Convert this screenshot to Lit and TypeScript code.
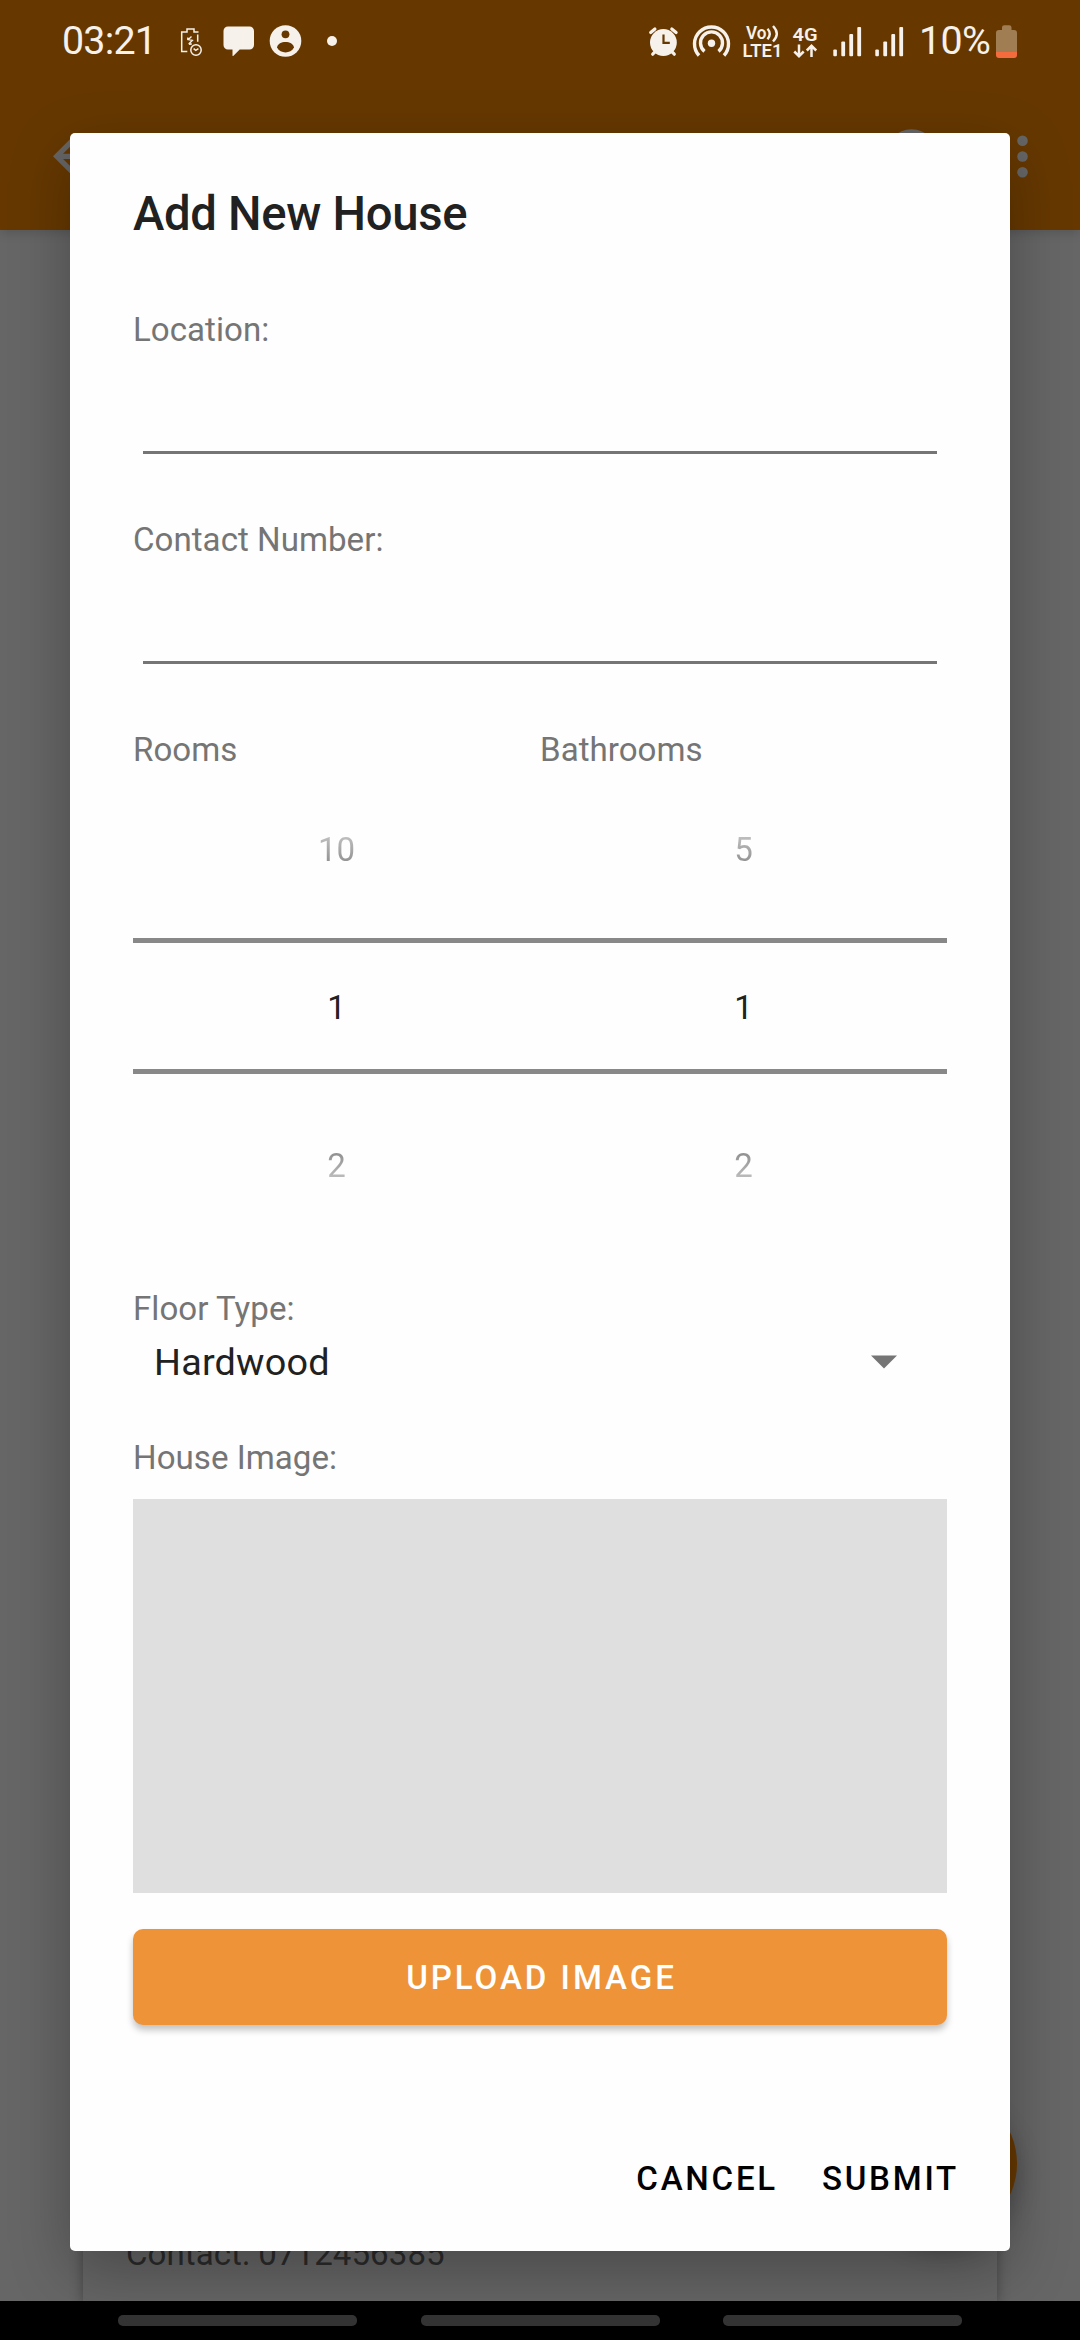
import { LitElement, html, css, svg } from "lit";
import { customElement, property } from "lit/decorators.js";

const signal = (x: number) => svg`
  <rect x=${x} y="49.5" width="3.6" height="6.7" rx="1"/>
  <rect x=${x + 8} y="41.5" width="3.8" height="14.7" rx="1"/>
  <rect x=${x + 16} y="34" width="3.8" height="22.2" rx="1"/>
  <rect x=${x + 24} y="27" width="3.8" height="29.2" rx="1"/>`;

@customElement("status-bar")
class StatusBar extends LitElement {
  static styles = css`
    :host { display: flex; align-items: flex-start; height: 82px; color: #f6f1ea;
      font: 400 39.4px/46px Roboto, sans-serif; }
    .clock { width: 114px; padding: 18px 0 0 62px; letter-spacing: -0.8px; }
    .notes { width: 170px; height: 82px; }
    .spacer { flex: 1; }
    .system { width: 225px; height: 82px; }
    .gap { width: 50px; flex: none; }
    .percent { padding-top: 18px; width: 76px; white-space: nowrap; letter-spacing: -0.7px; }
    .battery { width: 30px; height: 82px; margin-right: 55px; }
    .net { font: 600 17.5px Roboto, sans-serif; }
    .net.large { font-size: 19px; }
    svg { display: block; flex: none; }
  `;
  render() {
    return html`
      <span class="clock">03:21</span>
      <svg class="notes" viewBox="176 0 170 82" fill="none" stroke="#f6f1ea">
        <path stroke-width="1.5" d="M198.500 32H194V29h-7v3h-5.300v19.500h5.600M197.700 34.500v7.200"/>
        <path stroke-width="1.400" d="M191.500 36.500l-3.200 3 4 .9-3.600 3.600M187.800 37.500v2.500M191.800 44l-3 .2"/>
        <circle cx="196" cy="50" r="5.200" stroke-width="1.500"/>
        <path stroke-width="1.400" d="M193.600 48.600l2.200 1.800 2.600-1.800"/>
        <path fill="#f6f1ea" stroke="none" d="M228 26.5h21.5a4.5 4.5 0 0 1 4.5 4.5v14a4.5 4.5 0 0 1-4.5 4.5h-9.8L233.2 56q-.7.4-.7-.5v-6H228a4.5 4.5 0 0 1-4.5-4.5V31a4.5 4.5 0 0 1 4.5-4.5z"/>
        <circle cx="285.5" cy="41" r="15.8" fill="#f6f1ea" stroke="none"/>
        <circle cx="285.5" cy="34.3" r="3.9" fill="#663800" stroke="none"/>
        <path fill="#663800" stroke="none" d="M277 47.5c1-7.3 16-7.3 17 0-3.500 6.500-13.500 6.500-17 0z"/>
        <circle cx="332" cy="41" r="5" fill="#f6f1ea" stroke="none"/>
      </svg>
      <span class="spacer"></span>
      <svg class="system" viewBox="644 0 225 82" overflow="visible" fill="#f6f1ea">
        <circle cx="663.4" cy="42.500" r="13.4"/>
        <path fill="none" stroke="#f6f1ea" stroke-width="3.200" stroke-linecap="round" d="M650.7 32.500l4.200-3.500M671.800 29l4.300 3.500M652.700 54.200l3.300-3.300M674.300 54.200l-3.300-3.300"/>
        <path fill="none" stroke="#663800" stroke-width="2.200" d="M663.5 34.500v8.300h6.300"/>
        <circle cx="711.5" cy="43.200" r="3.700"/>
        <path fill="none" stroke="#f6f1ea" stroke-width="3.400" d="M704.500 51.400a11 11 0 1 1 14 0M699 55.500a17 17 0 1 1 25 0"/>
        <text class="net" x="746" y="39.300" textLength="20.500" lengthAdjust="spacingAndGlyphs">Vo</text>
        <path fill="none" stroke="#f6f1ea" stroke-width="2.400" d="M767.500 28.800q4.500 5 0 10.500M773 26q7.500 7.700 0 15.500"/>
        <text class="net" x="742.500" y="57.200" textLength="40" lengthAdjust="spacingAndGlyphs">LTE1</text>
        <text class="net large" x="792.500" y="40.500" textLength="25" lengthAdjust="spacingAndGlyphs">4G</text>
        <path fill="none" stroke="#f6f1ea" stroke-width="2.500" d="M799 44.500v11M794.300 51.500l4.700 4.700 4.700-4.700M811.500 57v-11M806.800 50.500l4.700-4.700 4.700 4.700"/>
        ${signal(833.3)}${signal(875.3)}
      </svg>
      <span class="gap"></span>
      <span class="percent">10%</span>
      <svg class="battery" viewBox="995 0 30 82">
        <path fill="#a17d53" d="M1002 30v-2.500q0-2.300 2.300-2.300h4.900q2.300 0 2.300 2.300V30h2.500q3 0 3 3v19.500h-21V33q0-3 3-3z"/>
        <path fill="#f46b3e" d="M996 52h21v3q0 3-3 3h-15q-3 0-3-3z"/>
      </svg>`;
  }
}

@customElement("number-picker")
class NumberPicker extends LitElement {
  @property() label = "";
  @property({ type: Array }) values: string[] = [];
  static styles = css`
    :host { display: flex; flex-direction: column; width: 407px; font: 400 33.1px/40px Roboto, sans-serif; letter-spacing: 0.03px; }
    .label { color: #757575; height: 40px; }
    .cell { display: flex; justify-content: center; color: #222; }
    .prev { padding: 60px 0 68px; }
    .next { padding: 72px 0 64px; }
    .faded { background-clip: text; -webkit-background-clip: text; color: transparent; }
    .prev .faded { background-image: linear-gradient(#bcbcbc 20%, #929292 80%); }
    .next .faded { background-image: linear-gradient(#929292 20%, #bcbcbc 80%); }
    .current { border-top: 5px solid #888; border-bottom: 5px solid #888; padding: 45px 0 41px; }
  `;
  render() {
    return html`<div class="label">${this.label}</div>
      <div class="cell prev"><span class="faded">${this.values[0]}</span></div>
      <div class="cell current">${this.values[1]}</div>
      <div class="cell next"><span class="faded">${this.values[2]}</span></div>`;
  }
}

@customElement("app-root")
class AppRoot extends LitElement {
  static styles = css`
    :host { display: block; width: 1080px; height: 2340px; font: 400 33.1px/40px Roboto, sans-serif; }
    * { box-sizing: border-box; }
    .screen { position: relative; width: 1080px; height: 2340px; overflow: hidden; display: flex; flex-direction: column; background: #666; }
    .top { background: #663800; height: 230px; box-shadow: 0 3px 10px rgba(0,0,0,.15); flex: none; }
    .toolbar { display: block; width: 1080px; height: 148px; }
    .page { flex: 1; display: flex; flex-direction: column; justify-content: flex-end; align-items: center; overflow: hidden; }
    .listing { width: 914px; height: 700px; background: #656565; color: #2b2b2b; padding: 0 43px 27px; display: flex; align-items: flex-end;
      box-shadow: 0 3px 12px rgba(0,0,0,.32); letter-spacing: 0.05px; }
    .nav { flex: none; height: 39px; background: #000; display: flex; justify-content: space-between; padding: 14px 118px 0; position: relative; z-index: 3; }
    .nav i { width: 239px; height: 11px; border-radius: 5px; background: #333; }
    .fab { position: absolute; left: 870px; top: 2090px; width: 147px; height: 147px; border-radius: 50%; background: #663800; box-shadow: 0 12px 24px rgba(0,0,0,.28); }
    .dialog { position: absolute; left: 70px; top: 133px; width: 940px; height: 2118px; background: #fefefe; border-radius: 5px;
      padding: 49px 63px 0; box-shadow: 0 20px 60px rgba(0,0,0,.28); display: flex; flex-direction: column; z-index: 2; }
    h1 { margin: 0; height: 64px; font-size: 47.25px; line-height: 64px; font-weight: 500; color: #212121; letter-spacing: -0.3px; }
    .label { color: #757575; letter-spacing: 0.03px; height: 40px; }
    .field { height: 210px; }
    .first { margin-top: 64px; }
    .line { margin: 101px 10px 0; height: 2.5px; background: #757575; }
    .pickers { display: flex; height: 559px; }
    .select { height: 109px; padding: 0 50px 0 21px; display: flex; justify-content: space-between; align-items: flex-start;
      font-size: 37.8px; line-height: 46px; letter-spacing: 0.2px; color: #212121; }
    .select span { margin-top: 10px; }
    .select svg { margin-top: 26px; }
    .preview { height: 394px; margin-top: 21px; background: #dfdfdf; flex: none; }
    .upload { height: 96px; margin-top: 36px; border: 0; border-radius: 10px; background: #ee9338; color: #fff; flex: none; padding: 2px 0 0 3px;
      font: 500 33.1px/40px Roboto, sans-serif; letter-spacing: 2.95px; box-shadow: 0 5px 7px rgba(0,0,0,.24); }
    .actions { display: flex; justify-content: flex-end; gap: 44px; margin: 134px -12px 0 0; color: #000; font-weight: 500; letter-spacing: 2.75px; }
  `;
  render() {
    return html`<div class="screen">
      <header class="top">
        <status-bar></status-bar>
        <svg class="toolbar" viewBox="0 82 1080 148" fill="#666">
          <path transform="translate(42.5 124.8) scale(2.625)" d="M20 11H7.830l5.590-5.590L12 4l-8 8 8 8 1.410-1.410L7.830 13H20v-2z"/>
          <circle cx="911.5" cy="155.500" r="26.200"/>
          <circle cx="1022.500" cy="140.700" r="5.300"/><circle cx="1022.500" cy="156.500" r="5.300"/><circle cx="1022.500" cy="172.300" r="5.300"/>
        </svg>
      </header>
      <main class="page"><div class="listing">Contact: 0712456385</div></main>
      <nav class="nav"><i></i><i></i><i></i></nav>
      <div class="fab"></div>
      <section class="dialog">
        <h1>Add New House</h1>
        <div class="field first"><div class="label">Location:</div><div class="line"></div></div>
        <div class="field"><div class="label">Contact Number:</div><div class="line"></div></div>
        <div class="pickers">
          <number-picker label="Rooms" .values=${["10", "1", "2"]}></number-picker>
          <number-picker label="Bathrooms" .values=${["5", "1", "2"]}></number-picker>
        </div>
        <div class="label">Floor Type:</div>
        <div class="select"><span>Hardwood</span>
          <svg width="26" height="14" viewBox="0 0 26 14"><path d="M0 .5h26l-13 13z" fill="#757575"/></svg></div>
        <div class="label">House Image:</div>
        <div class="preview"></div>
        <button class="upload">UPLOAD IMAGE</button>
        <div class="actions"><span>CANCEL</span><span>SUBMIT</span></div>
      </section>
    </div>`;
  }
}
